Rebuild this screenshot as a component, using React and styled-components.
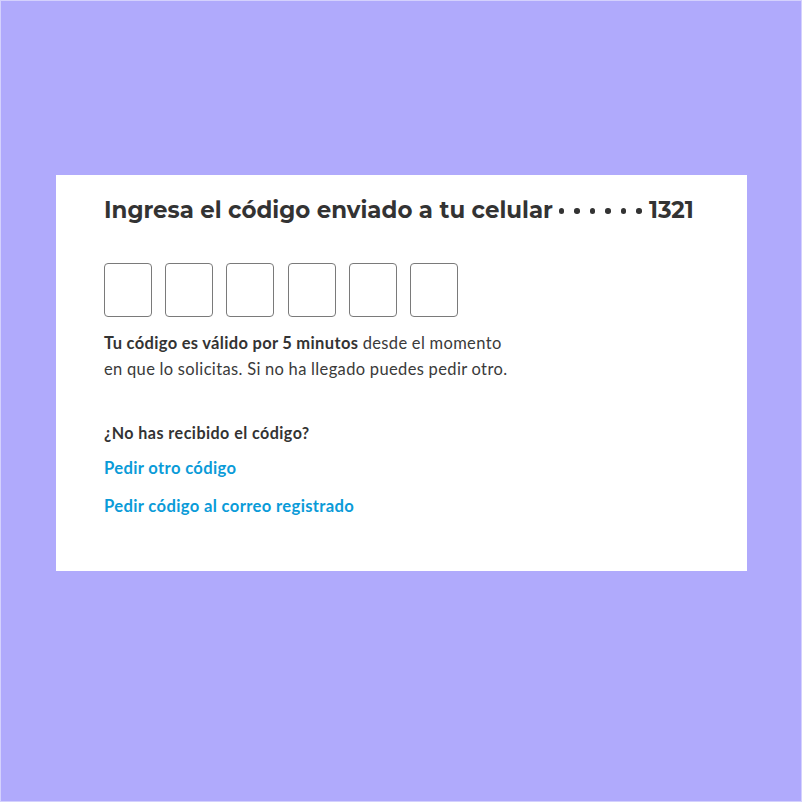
import React from "react";
import styled, { createGlobalStyle } from "styled-components";

const Global = createGlobalStyle`
  html, body { margin: 0; padding: 0; }
  body { background: #b0aafc; }
`;

const Page = styled.div`
  width: 802px;
  height: 802px;
  box-sizing: border-box;
  border: 1px solid #d4d1fd;
  background: #b0aafc;
  padding: 174px 0 0 55px;
`;

const Card = styled.div`
  width: 691px;
  height: 396px;
  box-sizing: border-box;
  background: #ffffff;
  padding: 20px 48px 0 48px;
  display: flex;
  flex-direction: column;
`;

const Title = styled.h1`
  margin: 0;
  font-family: "Montserrat", "Noto Sans", sans-serif;
  font-weight: 700;
  font-size: 22.9px;
  line-height: 30px;
  color: #333333;
  white-space: nowrap;
  display: flex;
  align-items: center;
`;

const Dots = styled.span`
  display: inline-flex;
  gap: 10px;
  margin: 2px 7px 0 6px;
`;

const Dot = styled.span`
  width: 5.5px;
  height: 5.5px;
  border-radius: 50%;
  background: #333333;
`;

const CodeRow = styled.div`
  display: flex;
  gap: 13.2px;
  margin-top: 38px;
`;

const CodeBox = styled.input`
  width: 48px;
  height: 54px;
  box-sizing: border-box;
  border: 1px solid #7a7a7a;
  border-radius: 4px;
  background: #fff;
  padding: 0;
  outline: none;
`;

const Info = styled.p`
  margin: 13px 0 0 0;
  font-family: "Lato", sans-serif;
  font-size: 16.5px;
  line-height: 26px;
  letter-spacing: 0.37px;
  word-spacing: -0.3px;
  color: #3a3a3a;
  width: 410px;
  b { font-weight: 700; color: #333; }
`;

const Question = styled.p`
  margin: 41px 0 0 0;
  font-family: "Lato", sans-serif;
  font-weight: 700;
  font-size: 16.1px;
  line-height: 20px;
  letter-spacing: 0.45px;
  color: #333333;
`;

const Link = styled.a`
  display: block;
  font-family: "Lato", sans-serif;
  font-weight: 700;
  font-size: 16.6px;
  line-height: 20px;
  letter-spacing: 0.35px;
  color: #0a9bd8;
  text-decoration: none;
  margin-top: ${(p) => p.$mt}px;
  cursor: pointer;
`;

export default function App() {
  return (
    <>
      <Global />
      <Page>
        <Card>
          <Title>
            Ingresa el código enviado a tu celular
            <Dots>
              {[0, 1, 2, 3, 4, 5].map((i) => (
                <Dot key={i} />
              ))}
            </Dots>
            1321
          </Title>
          <CodeRow>
            {[0, 1, 2, 3, 4, 5].map((i) => (
              <CodeBox key={i} maxLength={1} />
            ))}
          </CodeRow>
          <Info>
            <b>Tu código es válido por 5 minutos</b> desde el momento en que lo
            solicitas. Si no ha llegado puedes pedir otro.
          </Info>
          <Question>¿No has recibido el código?</Question>
          <Link $mt={15}>Pedir otro código</Link>
          <Link $mt={18}>Pedir código al correo registrado</Link>
        </Card>
      </Page>
    </>
  );
}
